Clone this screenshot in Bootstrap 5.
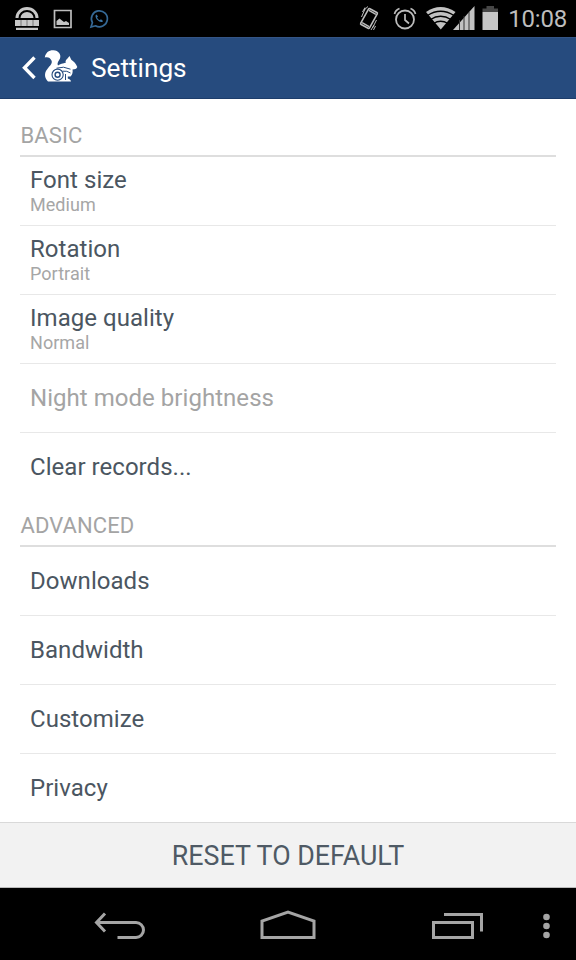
<!DOCTYPE html>
<html lang="en">
<head>
<meta charset="utf-8">
<meta name="viewport" content="width=device-width, initial-scale=1">
<title>Settings</title>
<link href="https://cdn.jsdelivr.net/npm/bootstrap@5.3.0/dist/css/bootstrap.min.css" rel="stylesheet">
<style>
body{font-family:Roboto,"Noto Sans",sans-serif;color:#46525e;height:960px;overflow:hidden}
svg{display:block;flex:none}
.status{height:37px;color:#c2c2c2}
.clock{font-size:24px;line-height:38px;color:#bdbdbd;letter-spacing:-.2px;padding-right:9px}
.appbar{height:62px;background:#264b7e;border-top:1px solid #345586;border-bottom:1px solid #1d3d6b}
.title{font-size:26.2px;line-height:60px;color:#fff;margin-left:12px;font-weight:400}
.sect{height:45px;line-height:48px;font-size:22px;font-weight:400;color:#a4a4a4;border-bottom:2px solid #dedede;padding-left:.5px;letter-spacing:.1px}
.sect-first{height:58px;padding-top:13px}
.setting{height:69px;padding:0 0 1px 10px;border:0;border-bottom:1px solid #e8e8e8;background:none;color:#4b5661;font-size:24px;line-height:28px;letter-spacing:.04px}
.setting:last-child{border-bottom:0}
.setting.flex-column{padding-bottom:1px}
.setting .val{font-size:18px;line-height:21px;color:#a6a6a6}
.setting.off{color:#a4a4a4}
.reset{height:66px;background:#f2f2f2;border:0;border-top:1px solid #d9d9d9;border-bottom:1px solid #bbb;border-radius:0;color:#4f5a65;font-size:26.800px;padding:2px 0 0}
.softkeys{height:72px}
</style>
</head>
<body class="bg-white m-0 d-flex flex-column">
<header class="status bg-black d-flex align-items-center flex-shrink-0">
  <svg width="120" height="37" viewBox="0 0 120 37" fill="none">
    <path d="M15.500 18A11.500 11 0 0 1 38.500 18H35.500A8.500 8 0 0 0 18.500 18Z" fill="#c8c8c8"/>
    <path d="M20.500 18a6.500 6 0 0 1 13 0Z" fill="#c8c8c8"/>
    <path d="M15 20h24v6H15zM16 27.700h22v2.300H16z" fill="#c8c8c8"/>
    <path d="M21 20v6M27 20v6M33 20v6" stroke="#777"/>
    <path d="M54.500 10.500h16.500v17H54.500z" stroke="#bdbdbd" stroke-width="1.700"/>
    <path d="M56.500 25v-4l3-2.500 2.500 2 2 1.500 2-1 3 2v2z" fill="#c4c4c4"/>
    <path d="M91 27l1.400-4.300a8 8 0 1 1 3.100 3.100z" stroke="#356996" stroke-width="1.700"/>
    <path d="M96.500 14.500c-2 1-.5 4 1 5.600 1.700 1.700 4.500 3 5.500.8l-2-1.700-1.400 1c-1.300-.7-2-1.600-2.600-2.800l1-1z" fill="#3b75a6"/>
  </svg>
  <svg class="ms-auto" width="153" height="37" viewBox="355 0 153 37" fill="none">
    <g stroke="#bdbdbd">
      <g transform="rotate(29 369 18.500)"><rect x="364" y="9.500" width="10" height="18" rx="1" stroke-width="1.600"/><path d="M365 11.500h8M365 25.500h8" stroke-width="1.500"/></g>
      <path d="M361.500 17l3.500-8M362.500 12l2.500-4.500M376.500 20l-4 8M375.500 26l-2 4M364 10l4-3.500M371 30l3-5" stroke-width="1"/>
      <circle cx="405" cy="19.500" r="9" stroke-width="1.800"/>
      <path d="M405 14v6l4 3.500M394.500 14q1-4 5-5.500M415.500 14q-1-4-5-5.500" stroke-width="1.700"/>
    </g>
    <path d="M426 12Q440.500 2 455.500 12L440.800 29.500Z" fill="#c2c2c2"/>
    <path d="M427.500 15.500Q440.500 7 454 15.500M430.500 19.500Q440.500 13 451 19.500M433.500 23.500Q440.500 19 448 23.500" stroke="#000" stroke-width="1.300"/>
    <path d="M453 30l21.500-24v24z" fill="#c2c2c2"/>
    <path d="M459.500 20v10M464 16v14M469 12v18" stroke="#333" stroke-width="1"/>
    <path d="M482.500 12h15.500v18h-15.500z" fill="#c6c6c6"/><path d="M482.500 8.500h4V6h7.500v2.500h4V12h-15.500z" fill="#474747"/>
  </svg>
  <span class="clock">10:08</span>
</header>

<nav class="appbar d-flex align-items-center flex-shrink-0">
  <svg width="79" height="60" viewBox="0 38 79 60" fill="none">
    <path d="M34.500 57.500L24.500 67.700 34.500 78" stroke="#fff" stroke-width="3.400"/>
    <path d="M44.800 57.500C45.500 52.500 49 50 53.500 50.200C58.500 50.500 61.500 54.500 60 58.500C58.500 61.500 56.800 63 58 65.500C60 64 63 63.500 66 62.500C64.800 61.500 66 60 67.500 58.500L69.500 56L71.300 59.800C74 61.500 76 63.800 77.300 67C76.500 69 75 69.200 72.500 69.500C73 72 72.500 74.500 70.500 76.500L67.800 76.500V78.500C69.200 79 70.700 79.700 71 81.500H48C45 78.500 44.200 74.500 46 71C48.500 66.500 53 64 51.500 60.500C50.300 57.500 47.500 56.500 44.800 57.500Z" fill="#fff"/>
    <circle cx="57.600" cy="74.700" r="5.600" stroke="#264b7e" stroke-width="1.100"/><circle cx="57.600" cy="74.700" r="2.500" stroke="#264b7e" stroke-width="1.400"/>
    <path d="M56.500 68.200q7-2.500 14 1M62.500 71.200q4.500-.7 8 1.800M65.500 74v6" stroke="#264b7e" stroke-width="1"/>
  </svg>
  <h1 class="title mb-0">Settings</h1>
</nav>

<main class="flex-grow-1 overflow-hidden mx-3 px-1">
  <h2 class="sect sect-first mb-0">BASIC</h2>
  <div class="list-group list-group-flush">
    <div class="setting d-flex flex-column justify-content-center"><span>Font size</span><span class="val">Medium</span></div>
    <div class="setting d-flex flex-column justify-content-center"><span>Rotation</span><span class="val">Portrait</span></div>
    <div class="setting d-flex flex-column justify-content-center"><span>Image quality</span><span class="val">Normal</span></div>
    <div class="setting d-flex align-items-center off">Night mode brightness</div>
    <div class="setting d-flex align-items-center">Clear records...</div>
  </div>
  <h2 class="sect mb-0">ADVANCED</h2>
  <div class="list-group list-group-flush">
    <div class="setting d-flex align-items-center">Downloads</div>
    <div class="setting d-flex align-items-center">Bandwidth</div>
    <div class="setting d-flex align-items-center">Customize</div>
    <div class="setting d-flex align-items-center">Privacy</div>
  </div>
</main>

<button class="reset btn w-100 flex-shrink-0" type="button">RESET TO DEFAULT</button>

<footer class="softkeys bg-black flex-shrink-0">
  <svg width="576" height="72" viewBox="0 888 576 72" fill="none" stroke="#a5a5a5" stroke-width="3">
    <path d="M97 922.500H136a7.500 7.500 0 0 1 0 15H117.500M105 913.500l-8.500 9 8.500 9"/>
    <path d="M262 937.500V921L288 912l26 9v16.500z"/>
    <path d="M433.500 922.500h39v15h-39zM444 914.500h37.500v17"/>
    <g fill="#a5a5a5" stroke="none"><circle cx="546.500" cy="917" r="3.300"/><circle cx="546.500" cy="926" r="3.300"/><circle cx="546.500" cy="935" r="3.300"/></g>
  </svg>
</footer>
<script src="https://cdn.jsdelivr.net/npm/bootstrap@5.3.0/dist/js/bootstrap.bundle.min.js"></script>
</body>
</html>
